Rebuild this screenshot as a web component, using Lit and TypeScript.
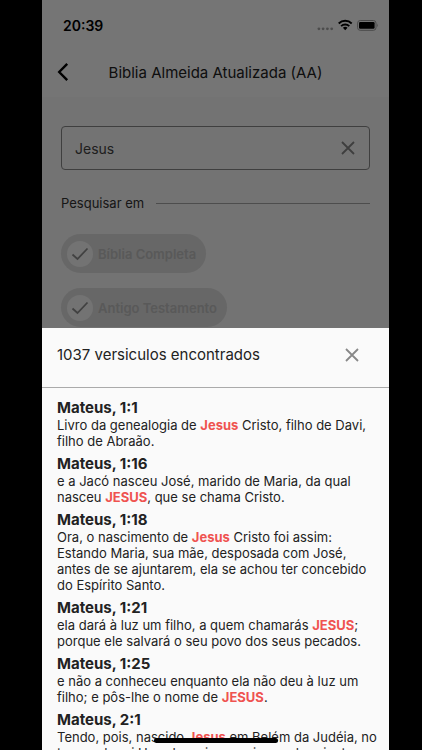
import { LitElement, html, css } from "lit";
import { customElement, property } from "lit/decorators.js";

interface Verse {
  ref: string;
  text: string;
}

const VERSES: Verse[] = [
  { ref: "Mateus, 1:1", text: "Livro da genealogia de Jesus Cristo, filho de Davi, filho de Abraão." },
  { ref: "Mateus, 1:16", text: "e a Jacó nasceu José, marido de Maria, da qual nasceu JESUS, que se chama Cristo." },
  {
    ref: "Mateus, 1:18",
    text: "Ora, o nascimento de Jesus Cristo foi assim: Estando Maria, sua mãe, desposada com José, antes de se ajuntarem, ela se achou ter concebido do Espírito Santo.",
  },
  { ref: "Mateus, 1:21", text: "ela dará à luz um filho, a quem chamarás JESUS; porque ele salvará o seu povo dos seus pecados." },
  { ref: "Mateus, 1:25", text: "e não a conheceu enquanto ela não deu à luz um filho; e pôs-lhe o nome de JESUS." },
  { ref: "Mateus, 2:1", text: "Tendo, pois, nascido Jesus em Belém da Judéia, no tempo do rei Herodes, eis que vieram do oriente a Jerusalém uns magos." },
];

const closeIcon = html`<svg width="20" height="20" viewBox="0 0 20 20" aria-hidden="true">
  <path d="M4 4 L16 16 M16 4 L4 16" fill="none" stroke="currentColor" stroke-width="1.8" />
</svg>`;

@customElement("verse-item")
class VerseItem extends LitElement {
  @property() ref = "";
  @property() text = "";
  @property() term = "";

  static styles = css`
    :host {
      display: block;
    }
    .ref {
      margin: 0;
      font-size: 15px;
      line-height: 19px;
      font-weight: 700;
    }
    .text {
      margin: 0;
      font-size: 13px;
      line-height: 16px;
    }
    .hit {
      background: none;
      color: #ef5350;
      font-weight: 700;
    }
  `;

  render() {
    const parts = this.text.split(new RegExp(`(${this.term})`, "i"));
    return html`<h2 class="ref">${this.ref}</h2>
      <p class="text">${parts.map((p, i) => (i % 2 ? html`<mark class="hit">${p}</mark>` : p))}</p>`;
  }
}

@customElement("scope-chip")
class ScopeChip extends LitElement {
  @property() label = "";

  static styles = css`
    :host {
      display: block;
    }
    .chip {
      display: inline-flex;
      vertical-align: top;
      align-items: center;
      gap: 5px;
      height: 39px;
      box-sizing: border-box;
      padding: 0 10px 0 6px;
      border-radius: 20px;
      background: #e0e0e0;
      color: #c2c2c2;
      font-size: 13px;
      font-weight: 600;
    }
    .tick {
      display: grid;
      place-items: center;
    }
    .box {
      grid-area: 1 / 1;
      appearance: none;
      width: 26px;
      height: 26px;
      margin: 0;
      border-radius: 50%;
      background: #fafafa;
    }
    .mark {
      grid-area: 1 / 1;
      pointer-events: none;
      color: #8f8f8f;
    }
  `;

  render() {
    return html`<label class="chip">
      <span class="tick">
        <input class="box" type="checkbox" checked />
        <svg class="mark" width="18" height="18" viewBox="0 0 18 18" aria-hidden="true">
          <path d="M1.5 9.5 L6.5 14 L16.5 3.5" fill="none" stroke="currentColor" stroke-width="1.8" />
        </svg>
      </span>
      ${this.label}
    </label>`;
  }
}

@customElement("app-root")
class AppRoot extends LitElement {
  static styles = css`
    :host {
      display: block;
      background: #000;
      padding: 0 33px 0 42px;
      font-family: Inter, "Liberation Sans", sans-serif;
      color: #222;
    }
    .screen {
      position: relative;
      height: 100vh;
      overflow: hidden;
      background: #fafafa;
    }
    .top {
      padding-bottom: 3px;
      background: #fff;
    }
    .status {
      display: flex;
      align-items: center;
      height: 50px;
      padding: 0 10px 0 21px;
      color: #000;
      font-size: 14px;
      font-weight: 600;
    }
    .signals {
      margin-left: auto;
    }
    .bar {
      display: grid;
      grid-template-columns: 42px 1fr 42px;
      align-items: center;
      height: 44px;
    }
    .title {
      margin: 0;
      text-align: center;
      font-size: 15px;
      font-weight: 400;
      white-space: nowrap;
    }
    .icon {
      display: grid;
      place-items: center;
      width: 42px;
      height: 40px;
      padding: 0;
      border: 0;
      background: none;
      color: #888;
    }
    .back {
      color: #000;
    }
    .form {
      padding: 29px 19px 0;
    }
    .field {
      display: flex;
      align-items: center;
      height: 44px;
      box-sizing: border-box;
      padding: 0 0 0 13px;
      border: 1px solid #8a8a8a;
      border-radius: 4px;
    }
    .query {
      flex: 1;
      min-width: 0;
      padding: 0;
      border: 0;
      outline: 0;
      background: none;
      color: #444;
      font: inherit;
      font-size: 14px;
    }
    .section {
      display: flex;
      align-items: center;
      gap: 12px;
      margin: 24px 0 22px;
      font-size: 13px;
      line-height: 18px;
      color: #333;
    }
    .rule {
      flex: 1;
      height: 1px;
      background: #a8a8a8;
    }
    .chips {
      display: grid;
      gap: 15px;
    }
    .scrim {
      position: absolute;
      inset: 0;
      background: rgba(0, 0, 0, 0.54);
    }
    .sheet {
      position: absolute;
      inset: 328px 0 0;
      overflow: hidden;
      background: #fafafa;
    }
    .head {
      display: flex;
      align-items: center;
      justify-content: space-between;
      height: 60px;
      padding: 0 16px 6px 15px;
      box-sizing: border-box;
      border-bottom: 1px solid #aaa;
    }
    .count {
      margin: 0;
      font-size: 15px;
      font-weight: 400;
    }
    .list {
      display: grid;
      gap: 5px;
      padding: 10px 12px 0 15px;
    }
    .home {
      position: absolute;
      left: 50%;
      bottom: 7px;
      width: 124px;
      height: 5px;
      margin-left: -62px;
      border-radius: 3px;
      background: #000;
    }
  `;

  render() {
    return html`<div class="screen">
      <header class="top">
        <div class="status">
          <span>20:39</span>
          <svg class="signals" width="62" height="14" viewBox="0 0 62 14" aria-hidden="true">
            <g fill="#a6a6a6">
              <circle cx="1.9" cy="10.8" r="1.4" />
              <circle cx="6.1" cy="10.8" r="1.4" />
              <circle cx="10.4" cy="10.8" r="1.4" />
              <circle cx="14.7" cy="10.8" r="1.4" />
            </g>
            <g fill="none" stroke="#000" stroke-width="1.9">
              <path d="M21.7 5.5 A9.2 9.2 0 0 1 34.7 5.5" />
              <path d="M24.1 8.1 A6 6 0 0 1 32.3 8.1" />
            </g>
            <path d="M28.2 12.2 L25.9 9.8 A3.5 3.5 0 0 1 30.5 9.8 Z" />
            <rect x="40.6" y="2.5" width="18.4" height="9.8" rx="2.6" fill="none" stroke="#a0a0a0" />
            <rect x="42" y="4" width="15.6" height="6.8" rx="1.2" />
            <path d="M60 5.6 Q61.5 7.4 60 9.2 Z" fill="#a0a0a0" />
          </svg>
        </div>
        <div class="bar">
          <button class="icon back" aria-label="Voltar">
            <svg width="20" height="20" viewBox="0 0 20 20" aria-hidden="true">
              <path d="M14.2 1.8 L6.2 10 L14.2 18.2" fill="none" stroke="currentColor" stroke-width="2.4" />
            </svg>
          </button>
          <h1 class="title">Biblia Almeida Atualizada (AA)</h1>
        </div>
      </header>
      <main class="form">
        <div class="field">
          <input class="query" type="text" value="Jesus" aria-label="Pesquisar" />
          <button class="icon" aria-label="Limpar">${closeIcon}</button>
        </div>
        <div class="section"><span>Pesquisar em</span><span class="rule"></span></div>
        <div class="chips">
          <scope-chip label="Bíblia Completa"></scope-chip>
          <scope-chip label="Antigo Testamento"></scope-chip>
        </div>
      </main>
      <div class="scrim"></div>
      <section class="sheet">
        <div class="head">
          <p class="count">1037 versiculos encontrados</p>
          <button class="icon" aria-label="Fechar">${closeIcon}</button>
        </div>
        <div class="list">
          ${VERSES.map((v) => html`<verse-item .ref=${v.ref} .text=${v.text} .term=${"Jesus"}></verse-item>`)}
        </div>
      </section>
      <div class="home"></div>
    </div>`;
  }
}
